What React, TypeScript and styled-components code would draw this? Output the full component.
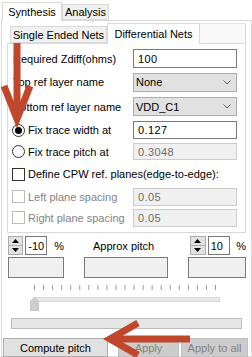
import React from "react";
import styled, { createGlobalStyle } from "styled-components";

const GlobalStyle = createGlobalStyle`
  html, body {
    margin: 0;
    padding: 0;
    background: #fff;
  }
  body {
    font-family: "Liberation Sans", Arial, sans-serif;
    font-size: 11px;
    color: #000;
  }
  * {
    box-sizing: border-box;
  }
  svg {
    display: block;
  }
`;

const Window = styled.div`
  position: relative;
  width: 252px;
  height: 357px;
  overflow: hidden;
  background: #fff;
  padding: 2px 0 0 1px;
`;

const TabBar = styled.div<{ $indent: number; $height: number }>`
  position: relative;
  z-index: 1;
  display: flex;
  align-items: flex-end;
  height: ${(p) => p.$height}px;
  padding-left: ${(p) => p.$indent}px;
`;

const Tab = styled.div<{ $active?: boolean; $width: number; $height: number }>`
  display: flex;
  align-items: center;
  justify-content: center;
  width: ${(p) => p.$width}px;
  height: ${(p) => (p.$active ? p.$height + 1 : p.$height)}px;
  margin-bottom: ${(p) => (p.$active ? -1 : 0)}px;
  border: 1px solid #d9d9d9;
  border-bottom: ${(p) => (p.$active ? "none" : "1px solid #d9d9d9")};
  background: ${(p) => (p.$active ? "#fff" : "#f0f0f0")};
  white-space: nowrap;
`;

const TabFiller = styled.div`
  flex: 1;
  align-self: stretch;
  border-top: 1px solid #e3e3e3;
  border-right: 1px solid #d9d9d9;
  background: #f9f9f9;
`;

const OuterPane = styled.div`
  width: 251px;
  height: 337px;
  border: 1px solid #d9d9d9;
  background: #fff;
`;

const InnerTabs = styled.div`
  width: 239px;
  margin: 2px 0 0 5px;
`;

const InnerPane = styled.div`
  height: 190px;
  border: 1px solid #d9d9d9;
  background: #fff;
  padding: 3px 8px 0 4px;
`;

const FormRow = styled.div<{ $height: number }>`
  display: flex;
  align-items: center;
  justify-content: space-between;
  height: ${(p) => p.$height}px;
`;

const Label = styled.span`
  padding-left: 1px;
  white-space: nowrap;
`;

const Choice = styled.label<{ $disabled?: boolean }>`
  display: flex;
  align-items: center;
  gap: 3px;
  white-space: nowrap;
  color: ${(p) => (p.$disabled ? "#838383" : "#000")};
`;

const RadioMark = styled.span<{ $checked?: boolean }>`
  position: relative;
  width: 13px;
  height: 13px;
  border: 1px solid #333;
  border-radius: 50%;
  background: #fff;
  &::after {
    content: "";
    display: ${(p) => (p.$checked ? "block" : "none")};
    position: absolute;
    left: 2px;
    top: 2px;
    width: 7px;
    height: 7px;
    border-radius: 50%;
    background: #000;
  }
`;

const CheckMark = styled.span<{ $disabled?: boolean }>`
  width: 13px;
  height: 13px;
  border: 1px solid ${(p) => (p.$disabled ? "#bcbcbc" : "#333")};
  background: #fff;
`;

const Field = styled.div<{ $kind: "edit" | "combo" | "disabled"; $height: number }>`
  display: flex;
  align-items: center;
  justify-content: space-between;
  width: 104px;
  height: ${(p) => p.$height}px;
  padding: 0 5px 0 ${(p) => (p.$kind === "combo" ? 2 : 4)}px;
  border: 1px solid
    ${(p) => (p.$kind === "edit" ? "#7a7a7a" : p.$kind === "combo" ? "#adadad" : "#cccccc")};
  background: ${(p) => (p.$kind === "edit" ? "#fff" : p.$kind === "combo" ? "#e1e1e1" : "#f0f0f0")};
  color: ${(p) => (p.$kind === "disabled" ? "#6d6d6d" : "#000")};
  letter-spacing: ${(p) => (p.$kind === "combo" ? 0 : 0.4)}px;
`;

const BottomGrid = styled.div`
  display: grid;
  grid-template-columns: 56px 84px 58px;
  column-gap: 20px;
  row-gap: 2px;
  margin: 3px 0 0 6px;
`;

const SpinGroup = styled.div<{ $offset: number }>`
  display: flex;
  align-items: center;
  height: 19px;
  padding-left: ${(p) => p.$offset}px;
`;

const SpinButtons = styled.div`
  display: flex;
  flex-direction: column;
  width: 16px;
  height: 19px;
  border: 1px solid #adadad;
  background: #e1e1e1;
`;

const SpinHalf = styled.div<{ $top?: boolean }>`
  flex: 1;
  display: flex;
  align-items: center;
  justify-content: center;
  border-bottom: ${(p) => (p.$top ? "1px solid #adadad" : "none")};
`;

const SpinValue = styled.div`
  display: flex;
  align-items: center;
  width: 23px;
  height: 19px;
  margin-left: 2px;
  padding-left: 2px;
  border: 1px solid #7a7a7a;
  background: #fff;
`;

const Percent = styled.span<{ $gap: number }>`
  margin-left: ${(p) => p.$gap}px;
`;

const Caption = styled.div`
  display: flex;
  align-items: center;
  height: 19px;
  padding-left: 9px;
`;

const ReadBox = styled.div`
  height: 21px;
  border: 1px solid #7a7a7a;
  background: #f0f0f0;
`;

const SliderBlock = styled.div`
  width: 191px;
  margin: 7px 0 0 28px;
`;

const Track = styled.div`
  position: relative;
  height: 14px;
  margin-top: 1px;
`;

const Groove = styled.div`
  margin: 6px 0 0 3px;
  width: 187px;
  height: 5px;
  border: 1px solid #d6d6d6;
  background: #e7e7e7;
`;

const Handle = styled.svg`
  position: absolute;
  left: 0;
  top: 0;
`;

const Progress = styled.div`
  width: 231px;
  height: 11px;
  margin: 7px 0 0 9px;
  border: 1px solid #bcbcbc;
  background: #e6e6e6;
`;

const ButtonRow = styled.div`
  display: flex;
  margin: 9px 0 0 1px;
`;

const Button = styled.div<{ $width: number; $disabled?: boolean; $gap?: number }>`
  display: flex;
  align-items: center;
  justify-content: center;
  width: ${(p) => p.$width}px;
  height: 19px;
  margin-left: ${(p) => p.$gap ?? 0}px;
  border: 1px solid ${(p) => (p.$disabled ? "#bfbfbf" : "#adadad")};
  background: ${(p) => (p.$disabled ? "#cccccc" : "#e1e1e1")};
  color: ${(p) => (p.$disabled ? "#838383" : "#000")};
  white-space: nowrap;
`;

const Overlay = styled.svg`
  position: absolute;
  left: 0;
  top: 0;
  pointer-events: none;
`;

const Chevron = () => (
  <svg width="8" height="5" viewBox="0 0 8 5">
    <polyline points="0.5,0.5 4,4 7.5,0.5" fill="none" stroke="#606060" strokeWidth="1" />
  </svg>
);

const Spinner = ({ value, offset, gap }: { value: string; offset: number; gap: number }) => (
  <SpinGroup $offset={offset}>
    <SpinButtons>
      <SpinHalf $top>
        <svg width="7" height="4" viewBox="0 0 7 4">
          <polygon points="0,4 3.5,0 7,4" fill="#000" />
        </svg>
      </SpinHalf>
      <SpinHalf>
        <svg width="7" height="4" viewBox="0 0 7 4">
          <polygon points="0,0 3.5,4 7,0" fill="#000" />
        </svg>
      </SpinHalf>
    </SpinButtons>
    <SpinValue>{value}</SpinValue>
    <Percent $gap={gap}>%</Percent>
  </SpinGroup>
);

const ticks = Array.from({ length: 21 }, (_, i) => 4.5 + i * 9.05);

export default function App() {
  return (
    <>
      <GlobalStyle />
      <Window>
        <TabBar $indent={1} $height={18}>
          <Tab $active $width={60} $height={18}>
            Synthesis
          </Tab>
          <Tab $width={47} $height={16}>
            Analysis
          </Tab>
        </TabBar>
        <OuterPane>
          <InnerTabs>
            <TabBar $indent={3} $height={20}>
              <Tab $width={97} $height={17}>
                Single Ended Nets
              </Tab>
              <Tab $active $width={93} $height={20}>
                Differential Nets
              </Tab>
              <TabFiller />
            </TabBar>
            <InnerPane>
              <FormRow $height={23}>
                <Label>Required Zdiff(ohms)</Label>
                <Field $kind="edit" $height={19}>100</Field>
              </FormRow>
              <FormRow $height={24}>
                <Label>Top ref layer name</Label>
                <Field $kind="combo" $height={19}>
                  None
                  <Chevron />
                </Field>
              </FormRow>
              <FormRow $height={25}>
                <Label>Bottom ref layer name</Label>
                <Field $kind="combo" $height={19}>
                  VDD_C1
                  <Chevron />
                </Field>
              </FormRow>
              <FormRow $height={22}>
                <Choice>
                  <RadioMark $checked />
                  Fix trace width at
                </Choice>
                <Field $kind="edit" $height={18}>0.127</Field>
              </FormRow>
              <FormRow $height={21}>
                <Choice>
                  <RadioMark />
                  Fix trace pitch at
                </Choice>
                <Field $kind="disabled" $height={17}>0.3048</Field>
              </FormRow>
              <FormRow $height={24}>
                <Choice>
                  <CheckMark />
                  Define CPW ref. planes(edge-to-edge):
                </Choice>
              </FormRow>
              <FormRow $height={21}>
                <Choice $disabled>
                  <CheckMark $disabled />
                  Left plane spacing
                </Choice>
                <Field $kind="disabled" $height={18}>0.05</Field>
              </FormRow>
              <FormRow $height={21}>
                <Choice $disabled>
                  <CheckMark $disabled />
                  Right plane spacing
                </Choice>
                <Field $kind="disabled" $height={18}>0.05</Field>
              </FormRow>
            </InnerPane>
          </InnerTabs>

          <BottomGrid>
            <Spinner value="-10" offset={0} gap={7} />
            <Caption>Approx pitch</Caption>
            <Spinner value="10" offset={2} gap={6} />
            <ReadBox />
            <ReadBox />
            <ReadBox />
          </BottomGrid>

          <SliderBlock>
            <svg width="191" height="6" viewBox="0 0 191 6">
              {ticks.map((x) => (
                <line key={x} x1={x} y1="0" x2={x} y2="5" stroke="#9a9a9a" strokeWidth="1" />
              ))}
            </svg>
            <Track>
              <Groove />
              <Handle width="9" height="14" viewBox="0 0 9 14">
                <path d="M0.5,4 L4.5,0.5 L8.5,4 L8.5,13.5 L0.5,13.5 Z" fill="#cdcdcd" stroke="#c4c4c4" />
              </Handle>
            </Track>
          </SliderBlock>

          <Progress />

          <ButtonRow>
            <Button $width={105}>Compute pitch</Button>
            <Button $width={61} $gap={10} $disabled>
              Apply
            </Button>
            <Button $width={67} $gap={2} $disabled>
              Apply to all
            </Button>
          </ButtonRow>
        </OuterPane>

        <Overlay width="252" height="357" viewBox="0 0 252 357">
          <g stroke="#c0472b" strokeWidth="7" fill="none" strokeLinejoin="miter">
            <line x1="17" y1="42" x2="17" y2="114" />
            <polyline points="4,86 17,119 30,86" />
            <line x1="112" y1="339" x2="190" y2="339" />
            <polyline points="138,323 110,339 138,355" />
          </g>
        </Overlay>
      </Window>
    </>
  );
}
